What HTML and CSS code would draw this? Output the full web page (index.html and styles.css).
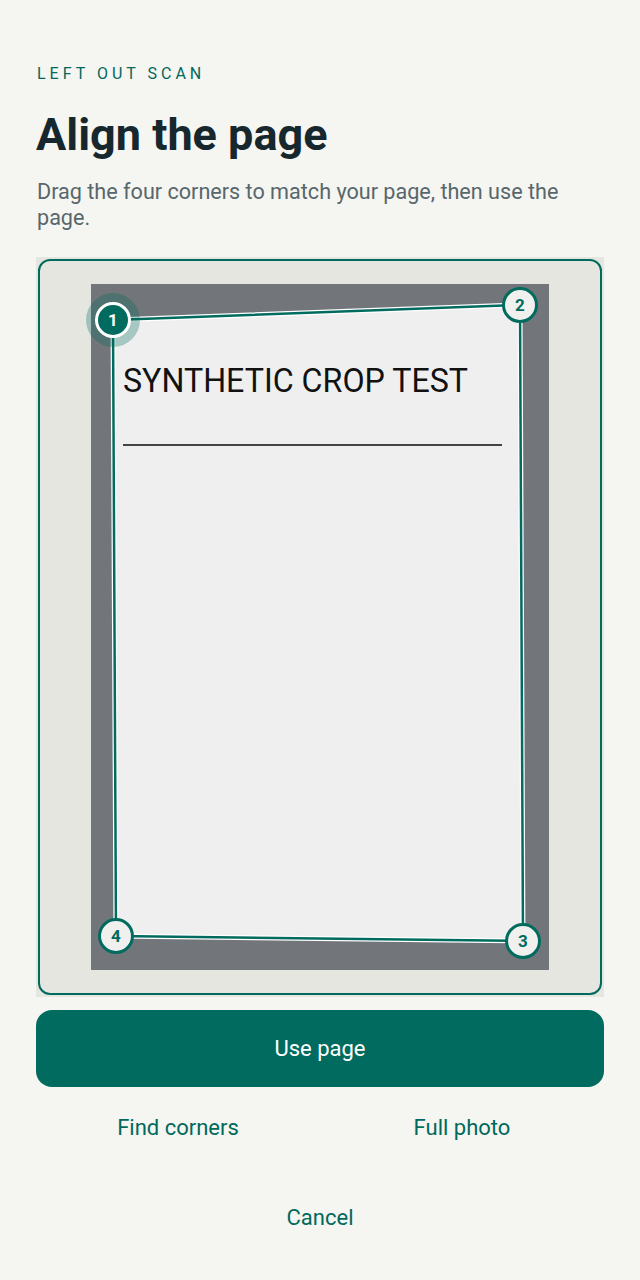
FILE: index.html
```html
<!DOCTYPE html>
<html lang="en">
<head>
<meta charset="utf-8">
<title>Align the page</title>
<link rel="stylesheet" href="styles.css">
</head>
<body>
<main class="screen">
  <p class="eyebrow">LEFT OUT SCAN</p>
  <h1 class="title">Align the page</h1>
  <p class="subtitle">Drag the four corners to match your page, then use the page.</p>

  <div class="stage">
    <div class="frame">
      <svg class="canvas" width="560" height="732" viewBox="0 0 560 732" xmlns="http://www.w3.org/2000/svg">
        <rect x="51" y="23" width="458" height="686" fill="#72767a"/>
        <polygon points="73,59 480,44 483,680 76,675" fill="#efefef"/>
        <text x="83" y="131" font-family="Roboto, 'Liberation Sans', sans-serif" font-size="33" fill="#111" textLength="345" lengthAdjust="spacingAndGlyphs">SYNTHETIC CROP TEST</text>
        <line x1="83" y1="184" x2="462" y2="184" stroke="#444" stroke-width="2"/>
        <polygon points="73,59 480,44 483,680 76,675" fill="none" stroke="#ffffff" stroke-width="5" stroke-linejoin="round"/>
        <polygon points="73,59 480,44 483,680 76,675" fill="none" stroke="#006b5e" stroke-width="2.5" stroke-linejoin="round"/>

        <circle cx="73" cy="59" r="27" fill="#006b5e" fill-opacity="0.3"/>
        <circle cx="73" cy="59" r="16.5" fill="#006b5e" stroke="#ffffff" stroke-width="3"/>
        <text x="73" y="65" class="num num-active" text-anchor="middle">1</text>

        <circle cx="480" cy="44" r="16.5" fill="#f0f0ef" stroke="#006b5e" stroke-width="3"/>
        <text x="480" y="50" class="num" text-anchor="middle">2</text>

        <circle cx="483" cy="680" r="16.5" fill="#f0f0ef" stroke="#006b5e" stroke-width="3"/>
        <text x="483" y="686" class="num" text-anchor="middle">3</text>

        <circle cx="76" cy="675" r="16.5" fill="#f0f0ef" stroke="#006b5e" stroke-width="3"/>
        <text x="76" y="681" class="num" text-anchor="middle">4</text>
      </svg>
    </div>
  </div>

  <button class="primary" type="button">Use page</button>

  <div class="links">
    <button class="link" type="button">Find corners</button>
    <button class="link" type="button">Full photo</button>
  </div>

  <div class="cancel-row">
    <button class="link" type="button">Cancel</button>
  </div>
</main>
</body>
</html>
```

FILE: styles.css
```css
html, body {
  margin: 0;
  padding: 0;
  background: #f5f5f1;
}

body {
  font-family: Roboto, "Liberation Sans", Arial, sans-serif;
  color: #17272e;
}

.screen {
  width: 640px;
  box-sizing: border-box;
  padding: 64px 36px 0;
  display: flex;
  flex-direction: column;
}

.eyebrow {
  margin: 0;
  font-size: 16px;
  line-height: 20px;
  letter-spacing: 4px;
  color: #00695c;
  padding-left: 1px;
}

.title {
  margin: 26px 0 0;
  font-size: 45px;
  line-height: 50px;
  font-weight: 700;
  color: #16272d;
}

.subtitle {
  margin: 19px 0 0;
  font-size: 21.6px;
  line-height: 26px;
  color: #57676c;
  padding-left: 1px;
}

.stage {
  margin-top: 26px;
  background: #e6e6e1;
  padding: 2px;
  width: 568px;
  box-sizing: border-box;
}

.frame {
  border: 2px solid #006b5e;
  border-radius: 12px;
  overflow: hidden;
}

.canvas {
  display: block;
}

.num {
  font-family: Roboto, "Liberation Sans", sans-serif;
  font-size: 17px;
  font-weight: 700;
  fill: #006b5e;
}

.num-active {
  fill: #ffffff;
}

.primary {
  margin-top: 13px;
  height: 77px;
  border: 0;
  border-radius: 16px;
  background: #006b5e;
  color: #ffffff;
  font-family: Roboto, "Liberation Sans", Arial, sans-serif;
  font-size: 22px;
}

.links {
  margin-top: 16px;
  display: grid;
  grid-template-columns: 1fr 1fr;
}

.link {
  height: 48px;
  border: 0;
  background: transparent;
  color: #00695c;
  font-family: Roboto, "Liberation Sans", Arial, sans-serif;
  font-size: 22px;
  padding: 0;
}

.cancel-row {
  margin-top: 42px;
  display: flex;
  justify-content: center;
}

.cancel-row .link {
  width: 200px;
}
```
